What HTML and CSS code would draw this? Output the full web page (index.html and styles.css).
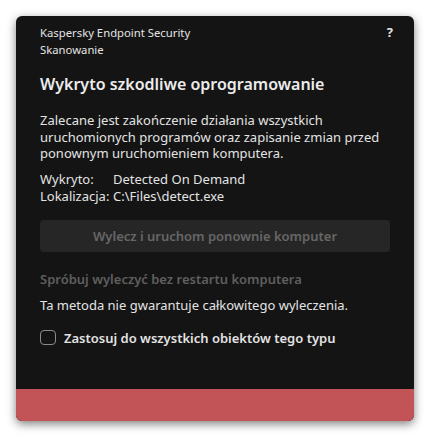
FILE: index.html
```html
<!DOCTYPE html>
<html lang="pl">
<head>
<meta charset="utf-8">
<link rel="stylesheet" href="styles.css">
</head>
<body>
<div class="window">
  <div class="content">
    <div class="header">
      <div class="app">
        <div>Kaspersky Endpoint Security</div>
        <div>Skanowanie</div>
      </div>
      <div class="help">?</div>
    </div>
    <h1 class="title">Wykryto szkodliwe oprogramowanie</h1>
    <p class="desc">Zalecane jest zakończenie działania wszystkich uruchomionych programów oraz zapisanie zmian przed ponownym uruchomieniem komputera.</p>
    <div class="info">
      <span>Wykryto:</span><span>Detected On Demand</span>
      <span>Lokalizacja:</span><span>C:\Files\detect.exe</span>
    </div>
    <div class="btn">Wylecz i uruchom ponownie komputer</div>
    <div class="alt">Spróbuj wyleczyć bez restartu komputera</div>
    <div class="note">Ta metoda nie gwarantuje całkowitego wyleczenia.</div>
    <label class="check"><span class="box"></span><span>Zastosuj do wszystkich obiektów tego typu</span></label>
  </div>
  <div class="footer"></div>
</div>
</body>
</html>
```
FILE: styles.css
```css
html, body {
  margin: 0;
  padding: 0;
  background: #ffffff;
}
body {
  font-family: "Noto Sans", "Open Sans", sans-serif;
  padding: 16px;
}
.window {
  width: 398px;
  height: 405px;
  background: #141414;
  border-radius: 6px;
  box-shadow: 0 3px 10px rgba(0, 0, 0, 0.5);
  display: flex;
  flex-direction: column;
  overflow: hidden;
}
.content {
  flex: 1;
  padding: 8px 24px 0 24px;
  color: #e3e3e3;
}
.header {
  display: flex;
  justify-content: space-between;
  font-size: 11.3px;
  line-height: 17px;
}
.help {
  font-weight: 700;
  font-size: 13px;
  margin-right: -3px;
}
.title {
  margin: 16px 0 0;
  font-size: 16px;
  line-height: 21px;
  font-weight: 600;
  color: #ececec;
}
.desc {
  margin: 17px 0 0;
  font-size: 13px;
  line-height: 16.5px;
}
.info {
  margin-top: 9px;
  display: grid;
  grid-template-columns: 73px 1fr;
  font-size: 13px;
  line-height: 17px;
}
.btn {
  margin-top: 15px;
  height: 32px;
  border-radius: 4px;
  background: #262626;
  color: #666666;
  font-size: 13px;
  font-weight: 600;
  display: flex;
  align-items: center;
  justify-content: center;
}
.alt {
  margin-top: 18px;
  font-size: 13px;
  line-height: 18px;
  font-weight: 600;
  color: #5f5f5f;
}
.note {
  margin-top: 8px;
  font-size: 13px;
  line-height: 18px;
}
.check {
  margin-top: 15px;
  display: flex;
  align-items: center;
  gap: 8px;
  font-size: 13px;
  line-height: 18px;
  font-weight: 600;
}
.box {
  width: 14px;
  height: 13px;
  border: 1px solid #8a8a8a;
  border-radius: 4px;
}
.footer {
  height: 32px;
  background: #c25457;
}
```
